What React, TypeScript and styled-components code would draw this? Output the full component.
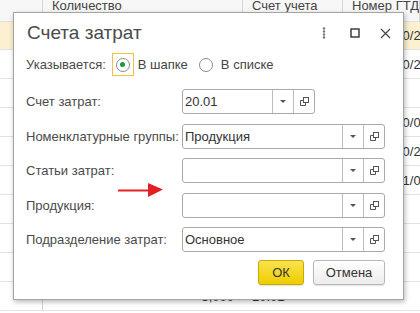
import React from 'react';
import styled, { createGlobalStyle } from 'styled-components';

const GlobalStyle = createGlobalStyle`
  html, body {
    margin: 0;
    padding: 0;
    background: #fff;
  }
  body {
    font-family: 'Liberation Sans', Arial, sans-serif;
    overflow: hidden;
  }
`;

const Screen = styled.div`
  position: relative;
  width: 420px;
  height: 313px;
  overflow: hidden;
  background: #fff;
`;

// таблица документа за окном
const Table = styled.div`
  display: grid;
  grid-template-columns: 43px 200px 100px 1fr;
  grid-template-rows: 22px 28px;
  grid-auto-rows: 29px;
  font-size: 13px;
  color: #333;
`;

const HeadCell = styled.div`
  box-sizing: border-box;
  background: #f7f7f7;
  border-right: 1px solid #d6d6d6;
  border-bottom: 1px solid #e0e0e0;
  padding: 0 9px;
  line-height: 12px;
  color: #444;
  white-space: nowrap;
  overflow: hidden;
`;

const Cell = styled.div<{ current?: boolean; first?: boolean; right?: boolean }>`
  box-sizing: border-box;
  display: flex;
  align-items: center;
  justify-content: ${p => (p.right ? 'flex-end' : 'flex-start')};
  padding: 0 9px;
  background: ${p => (p.current ? '#fbf1d0' : '#fff')};
  border-bottom: 1px solid #e3e3e3;
  border-right: ${p => (p.first ? '1px solid #d6d6d6' : 'none')};
  white-space: nowrap;
  overflow: hidden;
`;

const Dialog = styled.div`
  position: absolute;
  left: 13px;
  top: 12px;
  width: 391px;
  height: 288px;
  box-sizing: border-box;
  background: #fff;
  border: 1px solid #a4a4a4;
  box-shadow: 1px 2px 5px rgba(0, 0, 0, 0.28);
  display: flex;
  flex-direction: column;
  color: #4a4a4a;
  font-size: 13px;
`;

const Header = styled.div`
  display: flex;
  align-items: center;
  height: 40px;
  padding: 0 2px 0 13px;
`;

const Title = styled.div`
  flex: 1;
  font-size: 19px;
  color: #4b4b4b;
`;

const HeaderButton = styled.div`
  width: 31px;
  height: 30px;
  display: flex;
  align-items: center;
  justify-content: center;
`;

const Body = styled.div`
  display: flex;
  flex-direction: column;
  padding: 0 18px 0 12px;
`;

const RadioRow = styled.div`
  display: flex;
  align-items: center;
  height: 23px;
`;

const RadioLabel = styled.span`
  margin-right: 6px;
`;

const RadioOption = styled.div`
  display: flex;
  align-items: center;
  margin-right: 7px;
`;

const FocusBox = styled.div<{ focused?: boolean }>`
  box-sizing: border-box;
  width: 22px;
  height: 23px;
  display: flex;
  align-items: center;
  justify-content: center;
  border: 1px solid ${p => (p.focused ? '#f2c23c' : 'transparent')};
`;

const Circle = styled.div<{ checked?: boolean }>`
  box-sizing: border-box;
  width: 14px;
  height: 14px;
  border-radius: 50%;
  border: 1px solid #8c8c8c;
  background: #fff;
  display: flex;
  align-items: center;
  justify-content: center;

  &::after {
    content: '';
    display: ${p => (p.checked ? 'block' : 'none')};
    width: 5px;
    height: 5px;
    border-radius: 50%;
    background: #17993b;
  }
`;

const OptionText = styled.span`
  margin-left: 4px;
  color: #444;
`;

const Form = styled.div`
  display: grid;
  grid-template-columns: 156px 1fr;
  row-gap: 9.5px;
  align-items: center;
  margin-top: 13px;
`;

const Label = styled.div`
  white-space: nowrap;
`;

const Field = styled.div<{ width?: number }>`
  box-sizing: border-box;
  display: flex;
  height: 25px;
  width: ${p => (p.width ? `${p.width}px` : '100%')};
  border: 1px solid #a9a9a9;
  border-radius: 3px;
  background: #fff;
`;

const FieldValue = styled.div`
  flex: 1;
  display: flex;
  align-items: center;
  padding-left: 2px;
  color: #333;
  white-space: nowrap;
  overflow: hidden;
`;

const FieldButton = styled.div`
  width: 20px;
  display: flex;
  align-items: center;
  justify-content: center;
  border-left: 1px solid #bdbdbd;
`;

const Caret = styled.div`
  width: 0;
  height: 0;
  border-left: 3px solid transparent;
  border-right: 3px solid transparent;
  border-top: 3px solid #555;
`;

const Footer = styled.div`
  display: flex;
  justify-content: flex-end;
  gap: 9px;
  margin-top: 8px;
`;

const Button = styled.div<{ primary?: boolean; w: number }>`
  box-sizing: border-box;
  width: ${p => p.w}px;
  height: 25px;
  display: flex;
  align-items: center;
  justify-content: center;
  border-radius: 3px;
  font-size: 13px;
  color: #333;
  border: 1px solid ${p => (p.primary ? '#c9a800' : '#b8b8b8')};
  background: ${p =>
    p.primary
      ? 'linear-gradient(#f8e34f, #efcd00)'
      : 'linear-gradient(#ffffff, #ececec)'};
  box-shadow: 0 1px 1px rgba(0, 0, 0, 0.12);
`;

const Arrow = styled.svg`
  position: absolute;
  left: 116px;
  top: 180px;
`;

const DotsIcon = () => (
  <svg width="4" height="12" viewBox="0 0 4 12">
    <circle cx="2" cy="1.5" r="1.2" fill="#777" />
    <circle cx="2" cy="4.5" r="1.2" fill="#777" />
    <circle cx="2" cy="7.5" r="1.2" fill="#777" />
    <circle cx="2" cy="10.5" r="1.2" fill="#777" />
  </svg>
);

const MaxIcon = () => (
  <svg width="10" height="10" viewBox="0 0 10 10">
    <rect x="1" y="1" width="8" height="8" fill="none" stroke="#333" strokeWidth="1.4" />
  </svg>
);

const CloseIcon = () => (
  <svg width="11" height="11" viewBox="0 0 11 11">
    <path d="M1 1 L10 10 M10 1 L1 10" stroke="#444" strokeWidth="1.2" />
  </svg>
);

const OpenIcon = () => (
  <svg width="11" height="11" viewBox="0 0 11 11">
    <rect x="4.5" y="1.5" width="5" height="5" fill="none" stroke="#555" strokeWidth="1" />
    <path d="M4.5 4.5 H1.5 V9.5 H6.5 V6.5" fill="none" stroke="#555" strokeWidth="1" />
  </svg>
);

// только то, что видно из-под окна
const rows = [
  { qty: '', acct: '', gtd: '10702010/220120/0001' },
  { qty: '', acct: '', gtd: '10702010/220120/0002' },
  { qty: '', acct: '', gtd: '' },
  { qty: '', acct: '', gtd: '10702010/050120/0003' },
  { qty: '', acct: '', gtd: '10702010/220120/0004' },
  { qty: '', acct: '', gtd: '10702021/010120/0005' },
  { qty: '', acct: '', gtd: '' },
  { qty: '', acct: '', gtd: '' },
  { qty: '', acct: '', gtd: '' },
  { qty: '3,000', acct: '10.01', gtd: '' },
];

const fields = [
  { label: 'Счет затрат:', value: '20.01', width: 133 },
  { label: 'Номенклатурные группы:', value: 'Продукция' },
  { label: 'Статьи затрат:', value: '' },
  { label: 'Продукция:', value: '' },
  { label: 'Подразделение затрат:', value: 'Основное' },
];

const App: React.FC = () => {
  return (
    <Screen>
      <GlobalStyle />
      <Table>
        <HeadCell />
        <HeadCell>Количество</HeadCell>
        <HeadCell>Счет учета</HeadCell>
        <HeadCell>Номер ГТД</HeadCell>
        {rows.map((r, i) => (
          <React.Fragment key={i}>
            <Cell first current={i === 0} />
            <Cell right current={i === 0}>{r.qty}</Cell>
            <Cell current={i === 0}>{r.acct}</Cell>
            <Cell current={i === 0}>{r.gtd}</Cell>
          </React.Fragment>
        ))}
      </Table>

      <Dialog>
        <Header>
          <Title>Счета затрат</Title>
          <HeaderButton><DotsIcon /></HeaderButton>
          <HeaderButton><MaxIcon /></HeaderButton>
          <HeaderButton><CloseIcon /></HeaderButton>
        </Header>
        <Body>
          <RadioRow>
            <RadioLabel>Указывается:</RadioLabel>
            <RadioOption>
              <FocusBox focused><Circle checked /></FocusBox>
              <OptionText>В шапке</OptionText>
            </RadioOption>
            <RadioOption>
              <FocusBox><Circle /></FocusBox>
              <OptionText>В списке</OptionText>
            </RadioOption>
          </RadioRow>

          <Form>
            {fields.map(f => (
              <React.Fragment key={f.label}>
                <Label>{f.label}</Label>
                <Field width={f.width}>
                  <FieldValue>{f.value}</FieldValue>
                  <FieldButton><Caret /></FieldButton>
                  <FieldButton><OpenIcon /></FieldButton>
                </Field>
              </React.Fragment>
            ))}
          </Form>

          <Footer>
            <Button primary w={46}>ОК</Button>
            <Button w={72}>Отмена</Button>
          </Footer>
        </Body>
      </Dialog>

      <Arrow width="50" height="20" viewBox="0 0 50 20">
        <path d="M2 10.5 H34" stroke="#e51f26" strokeWidth="2" />
        <path d="M32 3 L47 9.5 L32 17 Z" fill="#e51f26" />
      </Arrow>
    </Screen>
  );
};

export default App;
